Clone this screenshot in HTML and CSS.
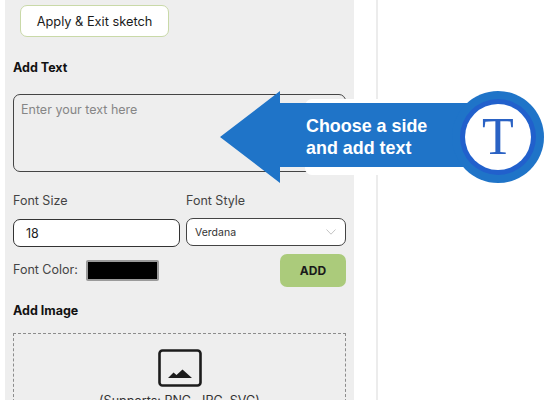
FILE: index.html
```html
<!DOCTYPE html>
<html lang="en">
<head>
<meta charset="utf-8">
<title>Add Text</title>
<link rel="stylesheet" href="styles.css">
</head>
<body>
<div class="page">
  <aside class="panel">
    <button class="exit-btn">Apply &amp; Exit sketch</button>
    <h3 class="heading heading-text">Add Text</h3>
    <div class="textarea">Enter your text here</div>
    <div class="font-row">
      <div class="field field-size">
        <span class="label">Font Size</span>
        <div class="input">18</div>
      </div>
      <div class="field field-style">
        <span class="label">Font Style</span>
        <div class="select">
          <span>Verdana</span>
          <svg class="chevron" width="10" height="6" viewBox="0 0 10 6"><path d="M0.5 0.5 L5 5.2 L9.5 0.5" fill="none" stroke="#c4c4c4" stroke-width="1"/></svg>
        </div>
      </div>
    </div>
    <div class="color-row">
      <div class="color-group">
        <span class="label">Font Color:</span>
        <div class="swatch"></div>
      </div>
      <button class="add-btn">ADD</button>
    </div>
    <h3 class="heading heading-image">Add Image</h3>
    <div class="dropzone">
      <svg class="image-icon" width="44" height="38" viewBox="0 0 44 38">
        <rect x="1.5" y="1.5" width="41" height="35" rx="3" fill="none" stroke="#1c1c1c" stroke-width="2.6"/>
        <path d="M10 29 L15.5 23.5 L18.5 26 L24.5 20.5 L34 29 Z" fill="#1c1c1c"/>
      </svg>
      <div class="supports">(Supports: PNG, JPG, SVG)</div>
    </div>
  </aside>
  <div class="divider"></div>
</div>
<div class="callout">
  <div class="callout-bg"></div>
  <svg class="callout-arrow" width="330" height="94" viewBox="0 0 330 94">
    <path d="M0 46 L60 0 L60 12 L260 12 L260 76 L60 76 L60 92 Z" fill="#1f74c8"/>
  </svg>
  <div class="callout-text">Choose a side<br>and add text</div>
  <div class="badge"><div class="badge-ring"><div class="badge-inner">T</div></div></div>
</div>
</body>
</html>
```
FILE: styles.css
```css
* { box-sizing: border-box; }
html, body { margin: 0; padding: 0; height: 400px; overflow: hidden; background: #fff; }
body { font-family: Inter, "Liberation Sans", sans-serif; color: #111; position: relative; }
.page { display: flex; height: 400px; }
.panel { width: 349px; margin-left: 5px; height: 400px; background: #eee; padding: 5px 8px 0 8px; overflow: hidden; flex: none; }
.divider { width: 2px; margin-left: 22px; height: 400px; background: #ececec; flex: none; }
.exit-btn { display: block; width: 149px; height: 32px; margin-left: 7px; background: #fff; border: 1px solid #c9d9a8; border-radius: 7px; font: 400 12.8px Inter, sans-serif; color: #1a1a1a; padding: 0; }
.heading { margin: 0; font: 700 12.5px/16px Inter, sans-serif; color: #111; }
.heading-text { margin-top: 23px; }
.textarea { margin-top: 18px; height: 78px; border: 1px solid #444; border-radius: 7px; padding: 7px 7px; font-size: 12.5px; line-height: 16px; color: #868686; }
.font-row { display: flex; gap: 6px; margin-top: 21px; }
.field { display: flex; flex-direction: column; }
.field-size { width: 167px; }
.field-style { width: 160px; }
.label { font-size: 12.5px; line-height: 16px; color: #444; }
.input { margin-top: 10px; height: 28px; border: 1px solid #333; border-radius: 7px; background: #fff; padding-left: 12px; font-size: 12.5px; line-height: 27px; color: #222; }
.select { margin-top: 9px; height: 28px; border: 1px solid #444; border-radius: 7px; background: #fff; padding: 0 9px 0 8px; display: flex; align-items: center; justify-content: space-between; font-size: 10.5px; color: #333; }
.color-row { display: flex; justify-content: space-between; margin-top: 7px; }
.color-group { display: flex; align-items: center; gap: 8px; height: 24px; margin-top: 4px; }
.swatch { width: 73px; height: 21px; background: #000; border: 2px solid #9a9a9a; border-radius: 2px; }
.add-btn { width: 66px; height: 33px; background: #abcb7b; border: 0; border-radius: 7px; font: 700 12px Inter, sans-serif; color: #1a1a1a; padding: 0; }
.heading-image { margin-top: 16px; }
.dropzone { margin-top: 14px; height: 120px; border: 1px dashed #8c8c8c; display: flex; flex-direction: column; align-items: center; padding-top: 15px; }
.image-icon { flex: none; }
.supports { margin-top: 6px; font-size: 12.5px; line-height: 16px; color: #333; }
.callout { position: absolute; left: 220px; top: 90px; width: 325px; height: 94px; }
.callout-bg { position: absolute; left: 85px; top: 9px; width: 180px; height: 76px; background: #fff; border-radius: 7px; }
.callout-arrow { position: absolute; left: 0; top: 1px; }
.callout-text { position: absolute; left: 86px; top: 25px; font: 700 17.9px/22px "Liberation Sans", Arial, sans-serif; color: #fff; }
.badge { position: absolute; left: 232px; top: 1px; width: 92px; height: 92px; border-radius: 50%; background: #1f74c8; padding: 8px; }
.badge-ring { width: 76px; height: 76px; border-radius: 50%; background: #2160cc; padding: 5px; }
.badge-inner { width: 66px; height: 66px; border-radius: 50%; background: #fff; display: flex; align-items: center; justify-content: center; font: 400 52px/66px "Liberation Serif", serif; color: #2a62c4; }
```
